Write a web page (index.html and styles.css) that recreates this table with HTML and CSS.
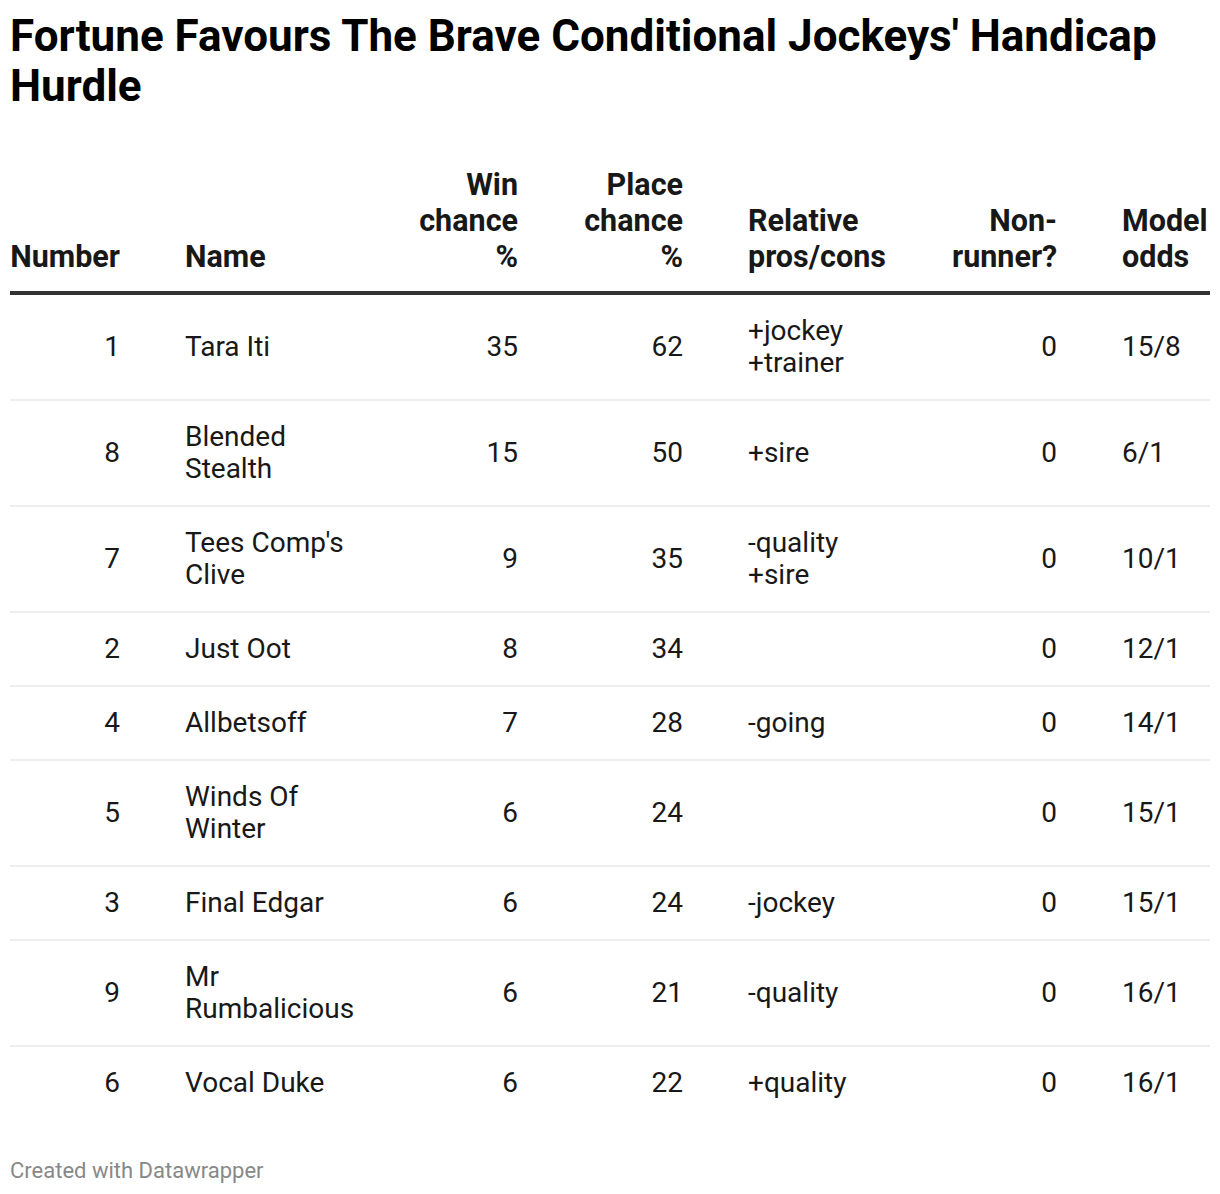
FILE: index.html
```html
<!DOCTYPE html>
<html lang="en">
<head>
<meta charset="utf-8">
<title>Fortune Favours The Brave Conditional Jockeys' Handicap Hurdle</title>
<link rel="stylesheet" href="styles.css">
</head>
<body>
<div class="chart">
  <h1 class="title">Fortune Favours The Brave Conditional Jockeys' Handicap Hurdle</h1>
  <table class="tbl">
    <colgroup>
      <col class="c1"><col class="c2"><col class="c3"><col class="c4"><col class="c5"><col class="c6"><col class="c7">
    </colgroup>
    <thead>
      <tr>
        <th class="first num">Number</th>
        <th>Name</th>
        <th class="num">Win chance %</th>
        <th class="num">Place chance %</th>
        <th>Relative pros/cons</th>
        <th class="num">Non-runner?</th>
        <th class="last">Model odds</th>
      </tr>
    </thead>
    <tbody>
      <tr><td class="first num">1</td><td>Tara Iti</td><td class="num">35</td><td class="num">62</td><td>+jockey +trainer</td><td class="num">0</td><td class="last">15/8</td></tr>
      <tr><td class="first num">8</td><td>Blended Stealth</td><td class="num">15</td><td class="num">50</td><td>+sire</td><td class="num">0</td><td class="last">6/1</td></tr>
      <tr><td class="first num">7</td><td>Tees Comp's Clive</td><td class="num">9</td><td class="num">35</td><td>-quality +sire</td><td class="num">0</td><td class="last">10/1</td></tr>
      <tr><td class="first num">2</td><td>Just Oot</td><td class="num">8</td><td class="num">34</td><td></td><td class="num">0</td><td class="last">12/1</td></tr>
      <tr><td class="first num">4</td><td>Allbetsoff</td><td class="num">7</td><td class="num">28</td><td>-going</td><td class="num">0</td><td class="last">14/1</td></tr>
      <tr><td class="first num">5</td><td>Winds Of Winter</td><td class="num">6</td><td class="num">24</td><td></td><td class="num">0</td><td class="last">15/1</td></tr>
      <tr><td class="first num">3</td><td>Final Edgar</td><td class="num">6</td><td class="num">24</td><td>-jockey</td><td class="num">0</td><td class="last">15/1</td></tr>
      <tr><td class="first num">9</td><td>Mr Rumbalicious</td><td class="num">6</td><td class="num">21</td><td>-quality</td><td class="num">0</td><td class="last">16/1</td></tr>
      <tr><td class="first num">6</td><td>Vocal Duke</td><td class="num">6</td><td class="num">22</td><td>+quality</td><td class="num">0</td><td class="last">16/1</td></tr>
    </tbody>
  </table>
  <div class="footer">Created with Datawrapper</div>
</div>
</body>
</html>
```

FILE: styles.css
```css
* { box-sizing: border-box; }
html, body { margin: 0; padding: 0; background: #ffffff; }
body {
  font-family: Roboto, "Liberation Sans", Arial, sans-serif;
  color: #181818;
}
.chart {
  padding: 11px 10px 0 10px;
  width: 1220px;
}
.title {
  margin: 0;
  font-size: 44px;
  line-height: 50px;
  font-weight: 700;
  color: #000000;
}
.tbl {
  margin-top: 56px;
  width: 1200px;
  table-layout: fixed;
  border-collapse: collapse;
}
.c1 { width: 142px; }
.c2 { width: 234px; }
.c3 { width: 164px; }
.c4 { width: 165px; }
.c5 { width: 204px; }
.c6 { width: 170px; }
.c7 { width: 121px; }
.tbl th, .tbl td {
  padding: 20px 32px 20px 33px;
  text-align: left;
  vertical-align: middle;
  font-size: 28px;
  line-height: 32px;
}
.tbl th {
  font-weight: 700;
  font-size: 30.5px;
  vertical-align: bottom;
  line-height: 36px;
  padding-top: 0;
  padding-bottom: 16px;
  border-bottom: 4px solid #333333;
  color: #181818;
}
.tbl td {
  font-weight: 400;
  border-bottom: 2px solid #eeeeee;
}
.tbl tbody tr:last-child td { border-bottom: none; }
.tbl .num { text-align: right; }
.tbl .first { padding-left: 0; }
.tbl .last { padding-right: 0; }
.footer {
  margin-top: 40px;
  font-size: 22px;
  line-height: 24px;
  color: #888888;
}
```
